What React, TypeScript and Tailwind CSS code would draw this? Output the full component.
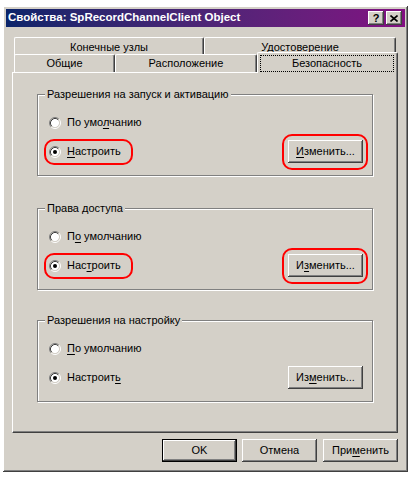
import React from "react";

const raised =
  "shadow-[inset_-1px_-1px_0_#404040,inset_1px_1px_0_#ffffff,inset_-2px_-2px_0_#808080,inset_2px_2px_0_#d4d0c8]";

function Mn({ text, u }: { text: string; u?: number }) {
  if (u === undefined) return <>{text}</>;
  return (
    <>
      {text.slice(0, u)}
      <span className="underline underline-offset-[2px]">{text[u]}</span>
      {text.slice(u + 1)}
    </>
  );
}

function Radio({ checked }: { checked?: boolean }) {
  return (
    <svg width="12" height="12" viewBox="0 0 12 12" className="shrink-0">
      <circle cx="6" cy="6" r="4.2" fill="#ffffff" />
      <path d="M9.89 2.11A5.5 5.5 0 0 0 2.11 9.89" stroke="#808080" fill="none" />
      <path d="M2.11 9.89A5.5 5.5 0 0 0 9.89 2.11" stroke="#ffffff" fill="none" />
      <path d="M9.18 2.82A4.5 4.5 0 0 0 2.82 9.18" stroke="#404040" fill="none" />
      <path d="M2.82 9.18A4.5 4.5 0 0 0 9.18 2.82" stroke="#d4d0c8" fill="none" />
      {checked && <circle cx="6" cy="6" r="2" fill="#000000" />}
    </svg>
  );
}

function WinButton({
  children,
  def,
}: {
  children: React.ReactNode;
  def?: boolean;
}) {
  return (
    <div
      className={`flex items-center justify-center w-[75px] h-[23px] shrink-0 bg-[#d4d0c8] text-black ${raised} ${
        def ? "border border-black" : ""
      }`}
    >
      {children}
    </div>
  );
}

type GroupProps = {
  title: string;
  def: { text: string; u: number };
  custom: { text: string; u: number };
  btnU: number;
  marked?: boolean;
};

function Group({ title, def, custom, btnU, marked }: GroupProps) {
  const red = marked ? "border-[#ff0000]" : "border-transparent";
  return (
    <fieldset className="ml-[24px] w-[336px] h-[88px] border border-[#808080] shadow-[inset_1px_1px_0_#ffffff,1px_1px_0_#ffffff] pl-[11px] pr-[4px]">
      <legend className="-ml-[4px] px-[2px] bg-[#d4d0c8] leading-[13px]">{title}</legend>
      <div className="flex items-center h-[13px] gap-[6px] mt-[15px]">
        <Radio />
        <span>
          <Mn text={def.text} u={def.u} />
        </span>
      </div>
      <div className="flex items-center justify-between h-[23px] mt-[11px]">
        <div
          className={`flex items-center gap-[6px] h-[26px] w-[89px] -ml-[5px] pl-[3px] border-2 rounded-[10px] ${red}`}
        >
          <Radio checked />
          <span>
            <Mn text={custom.text} u={custom.u} />
          </span>
        </div>
        <div
          className={`flex items-center w-[86px] h-[36px] pl-[4px] border-2 rounded-[10px] ${red}`}
        >
          <WinButton>
            <Mn text="Изменить..." u={btnU} />
          </WinButton>
        </div>
      </div>
    </fieldset>
  );
}

function Tab({ label, w, h }: { label: string; w: string; h: string }) {
  return (
    <div
      className={`${w} ${h} flex items-center justify-center border-l border-t border-white border-r border-r-[#404040] rounded-tl-[2px] rounded-tr-[2px] shadow-[inset_-1px_0_0_#808080] bg-[#d4d0c8]`}
    >
      {label}
    </div>
  );
}

export default function App() {
  return (
    <div className="min-h-screen bg-white pt-[6px] pl-[3px] font-['Liberation_Sans',Arial,sans-serif] text-[11px] text-black">
      <div
        className={`w-[405px] h-[466px] bg-[#d4d0c8] p-[3px] flex flex-col ${raised}`}
      >
        <div className="h-[18px] flex items-center justify-between bg-gradient-to-r from-[#0a246a] to-[#820e82] pl-[2px] pr-[3px]">
          <span className="text-white font-bold text-[11.5px] leading-none">
            Свойства: SpRecordChannelClient Object
          </span>
          <div className="flex gap-[2px]">
            <div
              className={`w-[16px] h-[14px] bg-[#d4d0c8] flex items-center justify-center font-bold text-[11px] leading-none ${raised}`}
            >
              ?
            </div>
            <div
              className={`w-[16px] h-[14px] bg-[#d4d0c8] flex items-center justify-center ${raised}`}
            >
              <svg width="8" height="7" viewBox="0 0 8 7">
                <path d="M0.5 0.5L7.5 6.5M7.5 0.5L0.5 6.5" stroke="#000" strokeWidth="1.6" />
              </svg>
            </div>
          </div>
        </div>

        <div className="mt-[10px] ml-[6px] w-[386px]">
          <div className="flex pl-[2px] h-[17px] items-start">
            <Tab label="Конечные узлы" w="w-[190px]" h="h-[19px]" />
            <Tab label="Удостоверение" w="w-[192px]" h="h-[19px]" />
          </div>
          <div className="relative z-10 flex pl-[2px] h-[18px] items-end">
            <Tab label="Общие" w="w-[101px]" h="h-[18px]" />
            <Tab label="Расположение" w="w-[142px]" h="h-[18px]" />
            <div className="w-[141px] h-[21px] -mb-[1px] -mr-[2px] flex items-start pt-[2px] pl-[2px] pr-[3px] border-l border-t border-white border-r border-r-[#404040] rounded-tl-[2px] rounded-tr-[2px] shadow-[inset_-1px_0_0_#808080] bg-[#d4d0c8]">
              <div className="w-full h-[17px] flex items-center justify-center border border-dotted border-black">
                Безопасность
              </div>
            </div>
          </div>
          <div className="h-[361px] border-l border-t border-white border-r border-b border-r-[#404040] border-b-[#404040] shadow-[inset_-1px_-1px_0_#808080] pt-[15px] flex flex-col">
            <Group
              title="Разрешения на запуск и активацию"
              def={{ text: "По умолчанию", u: 6 }}
              custom={{ text: "Настроить", u: 0 }}
              btnU={0}
              marked
            />
            <div className="h-[26px]" />
            <Group
              title="Права доступа"
              def={{ text: "По умолчанию", u: 1 }}
              custom={{ text: "Настроить", u: 3 }}
              btnU={1}
              marked
            />
            <div className="h-[24px]" />
            <Group
              title="Разрешения на настройку"
              def={{ text: "По умолчанию", u: 0 }}
              custom={{ text: "Настроить", u: 8 }}
              btnU={2}
            />
          </div>
        </div>

        <div className="mt-[6px] ml-[6px] w-[386px] flex justify-end gap-[5px]">
          <WinButton def>OK</WinButton>
          <WinButton>Отмена</WinButton>
          <div className="ml-[1px]">
            <WinButton>
              <Mn text="Применить" u={3} />
            </WinButton>
          </div>
        </div>
      </div>
    </div>
  );
}
